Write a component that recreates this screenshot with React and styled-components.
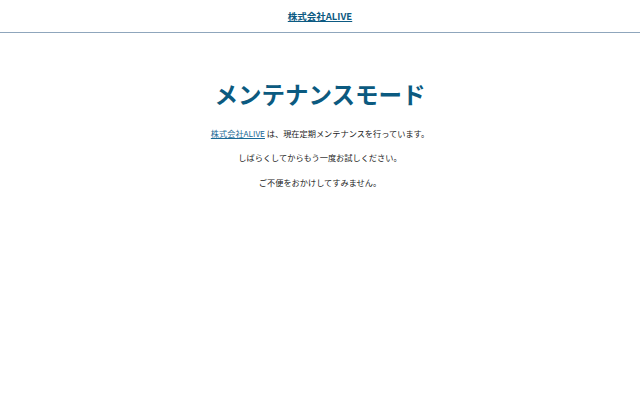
import styled, { createGlobalStyle } from "styled-components";

const GlobalStyle = createGlobalStyle`
  html, body {
    margin: 0;
    padding: 0;
    background: #ffffff;
    font-family: "Noto Sans CJK JP", "Noto Sans", sans-serif;
  }
`;

const Header = styled.header`
  height: 32px;
  border-bottom: 1px solid #8fa6bc;
  display: flex;
  align-items: center;
  justify-content: center;
`;

const Brand = styled.a`
  font-size: 9.5px;
  font-weight: 700;
  color: #0d5a82;
  text-decoration: underline;
`;

const Main = styled.main`
  display: flex;
  flex-direction: column;
  align-items: center;
  padding-top: 45px;
`;

const Title = styled.h1`
  margin: 0 0 15px;
  font-size: 23.5px;
  font-weight: 700;
  color: #0b5a80;
  line-height: 32px;
`;

const Text = styled.p`
  margin: 0 0 8px;
  font-size: 8.2px;
  line-height: 16.3px;
  color: #222;
`;

const Link = styled.a`
  color: #1a6a96;
  text-decoration: underline;
`;

const App = () => {
  return (
    <>
      <GlobalStyle />
      <Header>
        <Brand>株式会社ALIVE</Brand>
      </Header>
      <Main>
        <Title>メンテナンスモード</Title>
        <Text>
          <Link>株式会社ALIVE</Link> は、現在定期メンテナンスを行っています。
        </Text>
        <Text>しばらくしてからもう一度お試しください。</Text>
        <Text>ご不便をおかけしてすみません。</Text>
      </Main>
    </>
  );
};

export default App;
